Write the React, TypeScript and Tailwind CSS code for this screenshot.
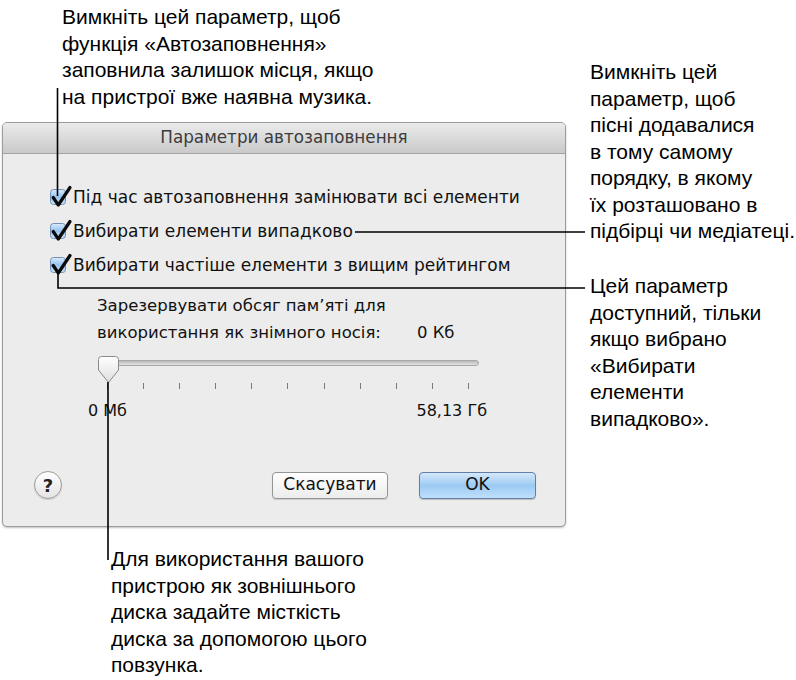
import React from "react";

const calloutFont = { fontFamily: '"Liberation Sans", Arial, sans-serif' };
const uiFont = { fontFamily: '"DejaVu Sans", "Liberation Sans", sans-serif' };

function CheckBox() {
  return (
    <svg width="24" height="24" viewBox="0 0 24 24" className="shrink-0">
      <defs>
        <linearGradient id="cbg" x1="0" y1="0" x2="0" y2="1">
          <stop offset="0" stopColor="#dcecfb" />
          <stop offset="0.5" stopColor="#93c3ef" />
          <stop offset="1" stopColor="#cfe6fb" />
        </linearGradient>
      </defs>
      <rect x="1.5" y="5.5" width="15" height="15" rx="3" fill="url(#cbg)" stroke="#7190b4" />
      <path d="M4.2 13.5 L9.3 21 L21 3.5" fill="none" stroke="#0b0b0b" strokeWidth="3.2" strokeLinecap="round" strokeLinejoin="round" />
    </svg>
  );
}

function Knob() {
  return (
    <svg width="24" height="29" viewBox="0 0 24 29" className="absolute left-0 top-0">
      <defs>
        <linearGradient id="kg" x1="0" y1="0" x2="0" y2="1">
          <stop offset="0" stopColor="#ffffff" />
          <stop offset="1" stopColor="#dedede" />
        </linearGradient>
      </defs>
      <path d="M1.5 4.5 Q1.5 1.5 4.5 1.5 H18.5 Q21.5 1.5 21.5 4.5 V15 L11.5 27.5 L1.5 15 Z" fill="url(#kg)" stroke="#8a8a8a" />
    </svg>
  );
}

const options = [
  "Під час автозаповнення замінювати всі елементи",
  "Вибирати елементи випадково",
  "Вибирати частіше елементи з вищим рейтингом",
];

export default function App() {
  return (
    <div className="relative w-[796px] h-[680px] bg-white overflow-hidden text-black">
      {/* callouts */}
      <p className="absolute left-[62px] top-[4px] text-[21px] leading-[26.5px]" style={calloutFont}>
        Вимкніть цей параметр, щоб<br />
        функція «Автозаповнення»<br />
        заповнила залишок місця, якщо<br />
        на пристрої вже наявна музика.
      </p>
      <p className="absolute left-[590px] top-[59px] text-[21px] leading-[26.5px]" style={calloutFont}>
        Вимкніть цей<br />
        параметр, щоб<br />
        пісні додавалися<br />
        в тому самому<br />
        порядку, в якому<br />
        їх розташовано в<br />
        підбірці чи медіатеці.
      </p>
      <p className="absolute left-[590px] top-[273px] text-[21px] leading-[26.5px]" style={calloutFont}>
        Цей параметр<br />
        доступний, тільки<br />
        якщо вибрано<br />
        «Вибирати<br />
        елементи<br />
        випадково».
      </p>
      <p className="absolute left-[111px] top-[546px] text-[21px] leading-[26.5px]" style={calloutFont}>
        Для використання вашого<br />
        пристрою як зовнішнього<br />
        диска задайте місткість<br />
        диска за допомогою цього<br />
        повзунка.
      </p>

      {/* dialog */}
      <div
        className="ml-[2px] mt-[122px] w-[564px] h-[405px] flex flex-col rounded-[5px] border border-[#9c9c9c] bg-[#ececec] shadow-[0_1px_2px_rgba(0,0,0,0.25)] overflow-hidden"
        style={uiFont}
      >
        <div className="h-[31px] shrink-0 flex items-center justify-center border-b border-[#a3a3a3] bg-gradient-to-b from-[#ebebeb] to-[#cacaca] text-[16.8px] text-[#3c3c3c]">
          Параметри автозаповнення
        </div>

        <div className="pt-[27px] pl-[46px] flex flex-col">
          {options.map((o) => (
            <div key={o} className="h-[34px] flex items-center text-[17px] text-[#111]">
              <div className="-mt-[4px]">
                <CheckBox />
              </div>
              <span>{o}</span>
            </div>
          ))}
        </div>

        <div className="mt-[9px] pl-[94px] text-[16.5px] leading-[27px] text-[#111]">
          <div>Зарезервувати обсяг пам’яті для</div>
          <div className="flex">
            <span>використання як знімного носія:</span>
            <span className="ml-[36px]">0 Кб</span>
          </div>
        </div>

        {/* slider */}
        <div className="relative ml-[94px] mt-[9px] w-[382px] h-[28px]">
          <div className="absolute left-[1px] right-0 top-[5px] h-[6px] rounded-full border border-[#a8a8a8] bg-gradient-to-b from-[#b9b9b9] to-[#e2e2e2]" />
          <Knob />
        </div>
        <div className="ml-[104px] w-[362px] flex justify-between">
          {Array.from({ length: 11 }).map((_, i) => (
            <div key={i} className="w-px h-[6px] bg-[#7a7a7a]" />
          ))}
        </div>
        <div className="ml-[85px] w-[399px] mt-[10px] flex justify-between text-[16px] text-[#111]">
          <span>0 Мб</span>
          <span>58,13 Гб</span>
        </div>

        {/* buttons */}
        <div className="mt-auto mb-[27px] flex items-center pl-[31px] pr-[29px]">
          <div className="w-[28px] h-[28px] rounded-full border border-[#9a9a9a] bg-gradient-to-b from-white to-[#e4e4e4] flex items-center justify-center text-[18px] font-bold text-[#222] shadow-[0_1px_1px_rgba(0,0,0,0.15)]">
            ?
          </div>
          <div className="ml-auto w-[116px] h-[27px] rounded-[4px] border border-[#959595] bg-gradient-to-b from-white to-[#ececec] flex items-center justify-center text-[17px] text-[#111] shadow-[0_1px_1px_rgba(0,0,0,0.15)]">
            Скасувати
          </div>
          <div className="ml-[31px] w-[117px] h-[27px] rounded-[4px] border border-[#5f7fa9] bg-gradient-to-b from-[#d5e8fb] via-[#9ccaf3] to-[#bfe0fc] flex items-center justify-center text-[17px] text-[#111] shadow-[0_1px_1px_rgba(0,0,0,0.2)]">
            OK
          </div>
        </div>
      </div>

      {/* leader lines */}
      <svg className="absolute left-0 top-0 pointer-events-none" width="796" height="680">
        <g stroke="#000" strokeWidth="1.6" fill="none">
          <path d="M57.5 88 V196" />
          <path d="M355 232 H585" />
          <path d="M58 272 V288 H585" />
          <path d="M108 382 V560" />
        </g>
      </svg>
    </div>
  );
}
